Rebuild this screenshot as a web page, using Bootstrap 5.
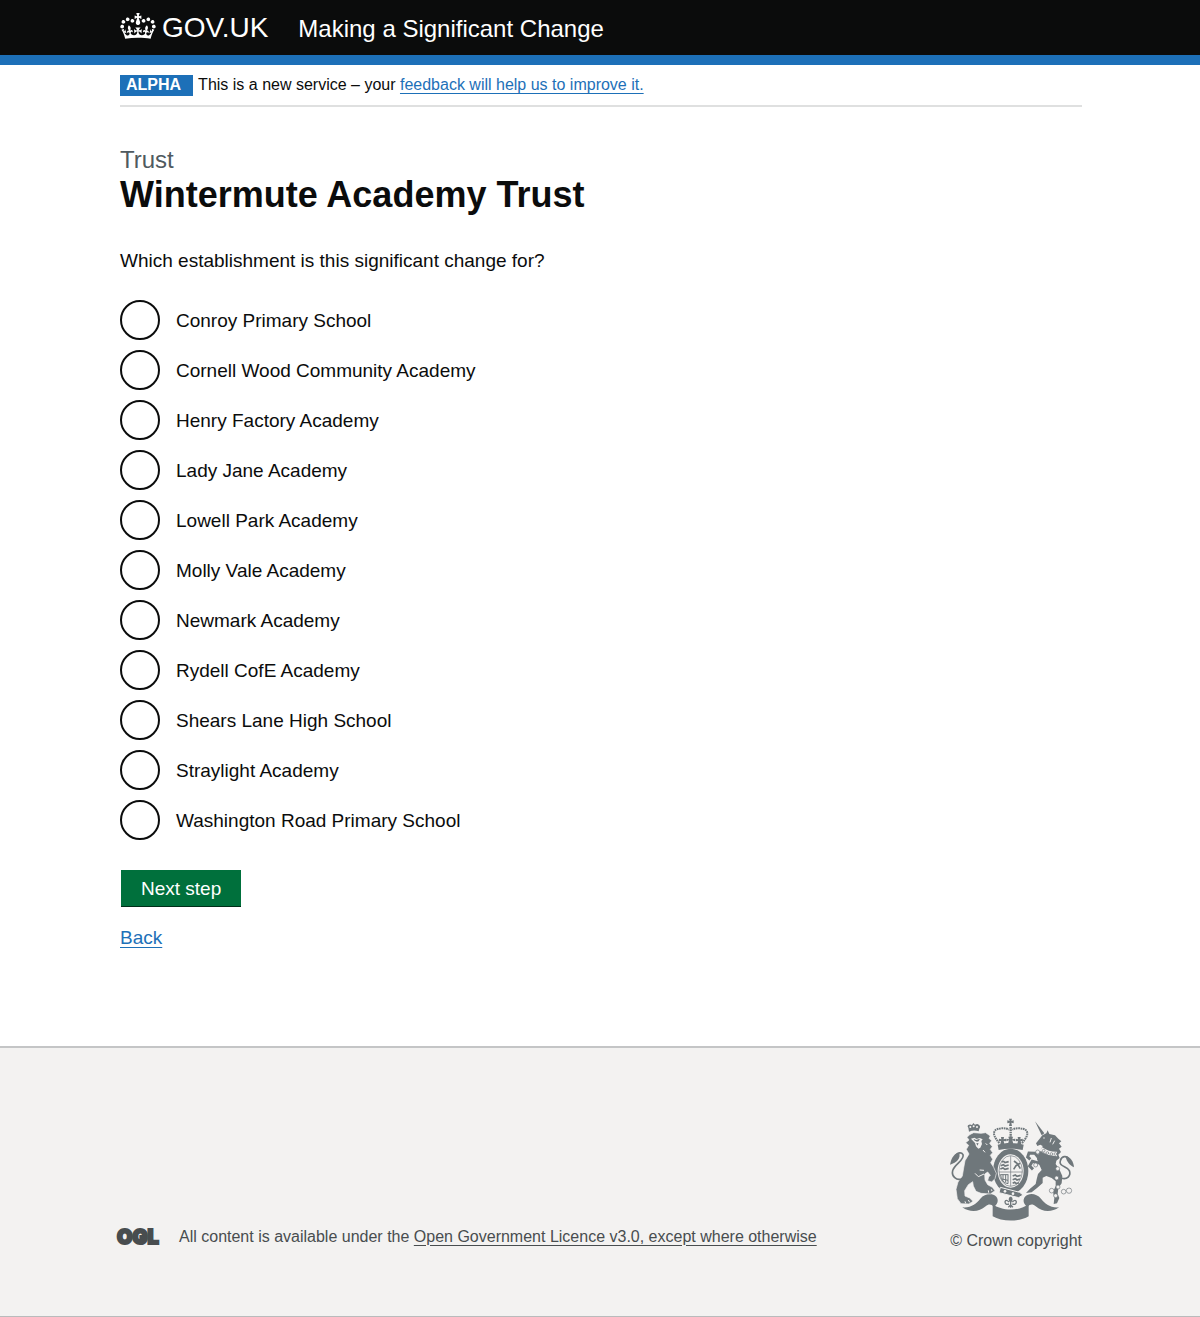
<!DOCTYPE html>
<html lang="en">
<head>
<meta charset="utf-8">
<meta name="viewport" content="width=device-width, initial-scale=1">
<title>Making a Significant Change</title>
<link href="https://cdn.jsdelivr.net/npm/bootstrap@5.3.0/dist/css/bootstrap.min.css" rel="stylesheet">
<style>
  body { font-family: "Liberation Sans", Arial, sans-serif; font-size: 19px; line-height: 25px; color: #0b0c0c; }
  .page-width { max-width: 964px; padding: 0 0 0 2px; margin: 0 auto; }
  .site-header { background: #0b0c0c; border-bottom: 10px solid #1d70b8; }
  .site-header a { color: #fff; text-decoration: none; }
  .header-row { padding-top: 13px; padding-bottom: 10px; column-gap: 30px; }
  .brand-link { font-size: 28px; line-height: 30px; gap: 6px; }
  .service-link { font-size: 24px; line-height: 32px; }
  .phase-row { padding: 10px 0 9px; border-bottom: 2px solid #dfe0e0; font-size: 16px; line-height: 21px; column-gap: 5px; }
  .phase-row > * { line-height: 20px; }
  .phase-tag { background: #1d70b8; color: #fff; font-weight: 700; padding: 0 12px 1px 6px; }
  .text-link { color: #1d70b8; text-decoration: underline; text-decoration-thickness: 1px; text-underline-offset: 3px; }
  .main-area { padding: 38px 0 96px; }
  .caption-text { font-size: 24px; line-height: 30px; color: #505a5f; }
  .page-title { font-size: 36px; line-height: 40px; font-weight: 700; margin-bottom: 33px; }
  .question { font-size: 19px; line-height: 25px; margin-bottom: 27px; }
  .choices { gap: 10px; margin-bottom: 30px; }
  .choice { min-height: 40px; gap: 16px; }
  .choice .form-check-input { width: 40px; height: 40px; margin: 0; border: 2px solid #0b0c0c; flex: none; }
  .choice .form-check-input:checked { background-color: #fff; background-image: radial-gradient(#0b0c0c 0 10px, transparent 11px); }
  .next-button { background: #00703c; color: #fff; border: 0; border-radius: 0; border-bottom: 1px solid #002d18; font-size: 19px; line-height: 25px; padding: 6px 20px 5px; margin: 0 0 18px 1px; }
  .next-button:hover { background: #005a30; color: #fff; }
  .site-footer { background: #f3f2f1; border-top: 2px solid #c4c5c6; border-bottom: 1px solid #b9bbbc; color: #484d4f; font-size: 16px; line-height: 21px; padding: 70px 0 65px; }
  .licence { gap: 19px; padding-bottom: 4px; }
  .ogl-mark { width: 43px; height: 22px; margin-left: -3px; flex: none; }
  .ogl-mark text { font: 900 20px Inter, sans-serif; fill: #484d4f; stroke: #484d4f; stroke-width: 2; }
  .footer-link { color: #484d4f; text-underline-offset: 3px; }
  .crest-link { color: #484d4f; text-decoration: none; gap: 9px; }
</style>
</head>
<body>
<header class="site-header">
  <div class="page-width d-flex flex-wrap align-items-start header-row">
    <a href="#" class="brand-link d-flex align-items-start" aria-label="GOV.UK">
      <svg width="36" height="26" viewBox="0 0 132 97" fill="#fff" aria-hidden="true"><path fill-rule="evenodd" d="M25 30.2c3.5 1.5 7.7-.2 9.1-3.7 1.5-3.6-.2-7.8-3.9-9.2-3.6-1.4-7.6.3-9.1 3.9-1.4 3.5.3 7.5 3.9 9zM9 39.5c3.6 1.5 7.8-.2 9.2-3.7 1.5-3.6-.2-7.8-3.9-9.1-3.6-1.5-7.6.2-9.1 3.8-1.4 3.5.3 7.5 3.8 9zM4.4 57.2c3.5 1.5 7.7-.2 9.1-3.8 1.5-3.6-.2-7.7-3.9-9.1-3.5-1.5-7.6.3-9.1 3.8-1.4 3.5.3 7.6 3.9 9.1zm38.3-21.4c3.5 1.5 7.7-.2 9.1-3.8 1.5-3.6-.2-7.7-3.9-9.1-3.6-1.5-7.6.3-9.1 3.8-1.3 3.6.4 7.7 3.9 9.1zm64.4-5.6c-3.6 1.5-7.8-.2-9.1-3.7-1.5-3.6.2-7.8 3.8-9.2 3.6-1.4 7.7.3 9.2 3.9 1.3 3.5-.4 7.5-3.9 9zm15.9 9.3c-3.6 1.5-7.7-.2-9.1-3.7-1.5-3.6.2-7.8 3.7-9.1 3.6-1.5 7.7.2 9.2 3.8 1.5 3.5-.3 7.5-3.8 9zm4.7 17.7c-3.6 1.5-7.8-.2-9.2-3.8-1.5-3.6.2-7.7 3.9-9.1 3.6-1.5 7.7.3 9.2 3.8 1.3 3.5-.4 7.6-3.9 9.1zM89.3 35.8c-3.6 1.5-7.8-.2-9.2-3.8-1.4-3.6.2-7.7 3.9-9.1 3.6-1.5 7.7.3 9.2 3.8 1.4 3.6-.3 7.7-3.9 9.1zM69.7 17.7l8.9 4.7V9.3l-8.9 2.8c-.2-.3-.5-.6-.9-.9L72.4 0H59.6l3.5 11.2c-.3.3-.6.5-.9.9l-8.8-2.8v13.1l8.8-4.7c.3.3.6.7.9.9l-5 15.4v.1c-.2.8-.4 1.6-.4 2.4 0 4.1 3.1 7.5 7 8.1h.2c.3 0 .7.1 1 .1.4 0 .7 0 1-.1h.2c4-.6 7.1-4.1 7.1-8.1 0-.8-.1-1.7-.4-2.4V34l-5.1-15.4c.4-.2.7-.6 1-.9zM66 92.8c16.9 0 32.8 1.1 47.1 3.2 4-16.9 8.9-26.7 14-33.5l-9.6-3.4c1 4.9 1.1 7.2 0 10.2-1.5-1.4-3-4.3-4.2-8.7L108.6 76c2.8-2 5-3.2 7.5-3.3-4.4 9.4-10 11.9-13.6 11.2-4.3-.8-6.3-4.6-5.6-7.9 1-4.7 5.7-5.9 8-.5 4.3-8.7-3-11.4-7.6-8.8 7.1-7.2 7.9-13.5 2.1-21.1-8 6.1-8.1 12.3-4.5 20.8-4.7-5.4-12.1-2.5-9.5 6.2 3.4-5.2 7.9-2 7.2 3.1-.6 4.3-6.4 7.8-13.5 7.2-10.3-.9-10.9-8-11.2-13.8 2.5-.5 7.1 1.8 11 7.3L80.2 60c-4.1 4.4-8 5.3-12.3 5.4 1.4-4.4 8-11.6 8-11.6H55.5s6.4 7.2 7.9 11.6c-4.2-.1-8-1-12.3-5.4l1.4 16.4c3.9-5.5 8.5-7.7 10.9-7.3-.3 5.8-.9 12.8-11.1 13.8-7.2.6-12.9-2.9-13.5-7.2-.7-5 3.8-8.3 7.1-3.1 2.7-8.7-4.6-11.6-9.4-6.2 3.7-8.5 3.6-14.7-4.6-20.8-5.8 7.6-5 13.9 2.2 21.1-4.7-2.6-11.9.1-7.7 8.8 2.3-5.5 7.1-4.2 8.1.5.7 3.3-1.3 7.1-5.7 7.9-3.5.7-9-1.8-13.5-11.2 2.5.1 4.7 1.3 7.5 3.3l-4.7-15.4c-1.2 4.4-2.7 7.2-4.3 8.7-1.1-3-.9-5.3 0-10.2l-9.5 3.4c5 6.9 9.9 16.7 14 33.5 14.8-2.1 30.8-3.2 47.7-3.2z"/></svg>
      <span>GOV.UK</span>
    </a>
    <a href="#" class="service-link">Making a Significant Change</a>
  </div>
</header>

<div class="page-width">
  <div class="phase-row d-flex flex-wrap">
    <strong class="phase-tag">ALPHA</strong>
    <span>This is a new service – your <a href="#" class="text-link">feedback will help us to improve it.</a></span>
  </div>

  <main class="main-area">
    <div class="caption-text">Trust</div>
    <h1 class="page-title">Wintermute Academy Trust</h1>
    <form>
      <fieldset>
        <legend class="question">Which establishment is this significant change for?</legend>
        <div class="choices d-flex flex-column">
          <div class="choice d-flex align-items-center"><input class="form-check-input" type="radio" name="school" id="s1"><label for="s1">Conroy Primary School</label></div>
          <div class="choice d-flex align-items-center"><input class="form-check-input" type="radio" name="school" id="s2"><label for="s2">Cornell Wood Community Academy</label></div>
          <div class="choice d-flex align-items-center"><input class="form-check-input" type="radio" name="school" id="s3"><label for="s3">Henry Factory Academy</label></div>
          <div class="choice d-flex align-items-center"><input class="form-check-input" type="radio" name="school" id="s4"><label for="s4">Lady Jane Academy</label></div>
          <div class="choice d-flex align-items-center"><input class="form-check-input" type="radio" name="school" id="s5"><label for="s5">Lowell Park Academy</label></div>
          <div class="choice d-flex align-items-center"><input class="form-check-input" type="radio" name="school" id="s6"><label for="s6">Molly Vale Academy</label></div>
          <div class="choice d-flex align-items-center"><input class="form-check-input" type="radio" name="school" id="s7"><label for="s7">Newmark Academy</label></div>
          <div class="choice d-flex align-items-center"><input class="form-check-input" type="radio" name="school" id="s8"><label for="s8">Rydell CofE Academy</label></div>
          <div class="choice d-flex align-items-center"><input class="form-check-input" type="radio" name="school" id="s9"><label for="s9">Shears Lane High School</label></div>
          <div class="choice d-flex align-items-center"><input class="form-check-input" type="radio" name="school" id="s10"><label for="s10">Straylight Academy</label></div>
          <div class="choice d-flex align-items-center"><input class="form-check-input" type="radio" name="school" id="s11"><label for="s11">Washington Road Primary School</label></div>
        </div>
      </fieldset>
      <button type="submit" class="btn next-button d-block">Next step</button>
      <a href="#" class="text-link">Back</a>
    </form>
  </main>
</div>

<footer class="site-footer">
  <div class="page-width d-flex flex-wrap justify-content-between align-items-end">
    <div class="licence d-flex align-items-center">
      <svg class="ogl-mark" viewBox="0 0 43 22" overflow="visible" role="img" aria-label="Open Government Licence"><text x="0" y="19">OGL</text></svg>
      <span>All content is available under the <a href="#" class="footer-link">Open Government Licence v3.0, except where otherwise</a></span>
    </div>
    <a href="#" class="crest-link d-flex flex-column">
      <svg width="125" height="103" viewBox="29 22 375 309" aria-hidden="true" fill="#6f777b">
        <!-- central crown -->
        <path d="M206 24h9l-2 7 7-2v9l-7-2 2 10h-9l2-10-7 2v-9l7 2z"/>
        <g fill="none" stroke="#6f777b" stroke-width="6" stroke-dasharray="5 2">
          <path d="M177 97c-14-16-20-28-13-37 8-9 34-9 42-3M245 97c14-16 20-28 13-37-8-9-34-9-42-3"/>
          <path d="M211 49v30" stroke-width="7"/>
        </g>
        <path d="M172 102c24-7 54-7 78 0l-3 16c-23-5-49-5-72 0zM203 99l3-10-8 3v-8l8 2-2-8h14l-2 8 8-2v8l-8-3 3 10zM180 100l2-9-7 1 1-8 7 2-1-7h9l-1 7 7-2v8l-7-1 2 9zM231 100l2-9-7 1v-8l7 2-1-7h9l-1 7 7-2 1 8-7-1 2 9z"/>
        <!-- scroll -->
        <path d="M157 280C182 302 240 302 265 280L265 317C238 334 184 334 157 317z"/>
        <path id="ribbon" d="M66 290C94 292 108 278 120 264C134 248 156 246 168 258C176 268 172 282 160 288C152 279 144 280 136 287C116 305 88 306 66 290z"/>
        <use href="#ribbon" transform="matrix(-1 0 0 1 422 0)"/>
        <g fill="none" stroke="#6f777b" stroke-width="4"><path d="M211 259v32M211 259q-8 6 0 15q8-9 0-15M206 274q-10-10-12 0 1 10 12 6M216 274q10-10 12 0-1 10-12 6M204 290l7-7 7 7"/></g>
        <!-- garter and shield -->
        <ellipse cx="211" cy="181" rx="53" ry="67"/>
        <ellipse cx="211" cy="181" rx="39" ry="50" fill="#f3f2f1"/>
        <g fill="none" stroke="#6f777b"><ellipse cx="211" cy="181" rx="35" ry="46" stroke-width="2"/>
        <path d="M211 136v90M176 184h70" stroke-width="2"/>
        <path d="M184 154l6-2 4 4 11-3M181 165l8-3 5 4 11-3M180 175l8-3 6 4 11-3M217 196l8-3 5 4 11-3M217 207l8-3 5 4 9-3M217 218l6-3 5 4 8-3" stroke-width="5"/><path d="M221 151l10 8 9 15M239 158l-12 7-7 11" stroke-width="5"/><path d="M180 192h24M181 192q1 24 22 27M188 192v18M196 192v22M203 192v27M185 205l18 4" stroke-width="3"/></g>
        <path d="M180 230l58 15 10 8-13 8-59-15z" stroke="#f3f2f1" stroke-width="3"/>
        <circle cx="194" cy="242" r="4" fill="#f3f2f1"/><circle cx="218" cy="249" r="4" fill="#f3f2f1"/>
        <!-- lion -->
        <path d="M84 51q-5-6 2-9 4-2 9 1l4-6 5 5q8-4 12 1 6 5 1 11l-2 8q-15-5-29 1z"/>
        <g fill="#f3f2f1"><circle cx="90" cy="49" r="3"/><circle cx="100" cy="47" r="3"/><circle cx="110" cy="49" r="3"/></g>
        <path stroke="#f3f2f1" stroke-width="2" d="M88 72L100 66 122 68 136 66 150 76 146 83 154 90 148 98 156 108 150 116 157 126 150 134 157 146 151 156 160 170 168 188 164 204 154 214 142 210 145 199 150 194 142 184 133 190 134 208 142 222 156 230 164 240 150 250 122 248 107 242 99 226 97 213 84 222 73 240 74 256 88 262 98 272 86 280 62 279 51 264 47 236 53 214 66 196 70 172 74 150 86 130 78 116 85 104 76 96 86 88 80 80z"/>
        <path d="M66 204C48 212 33 196 37 180C42 160 74 148 68 132C63 123 53 126 46 134" fill="none" stroke="#6f777b" stroke-width="5"/>
        <path d="M29 162C33 140 43 127 56 126C63 141 49 156 29 162z"/>
        <path d="M92 84l10-3 7 4 9-3 9 4-4 5 2 9-5 11-6 3-7-7-3-10z" fill="#f3f2f1"/>
        <path d="M99 84l8 4 12-4-4 8-5 1-7-3zM108 97l7 1-4 7z"/>
        <path d="M128 118l6 7M136 98l5 5M104 188l10 10 17-8M118 178l13 1M88 275l-4-7M76 278l-2-6M145 246l-1-7M155 241l-2-5" fill="none" stroke="#f3f2f1" stroke-width="3"/>
        <!-- unicorn -->
        <path d="M284 32l28 36-8 6z"/>
        <path d="M306 74L318 68 322 59 327 70 344 74 354 84 363 92 356 98 364 108 356 114 362 124 354 132 358 142 348 150 346 160 357 176 366 196 364 218 354 232 352 250 357 262 350 278 340 280 342 262 338 244 346 226 346 212 334 202 318 196 307 201 307 217 291 231 274 245 257 247 269 234 286 220 289 206 293 190 304 178 297 162 290 146 291 136 300 120 307 106 300 102 291 106 287 98 298 84z"/>
        <path d="M300 158L276 152 268 166 278 176M298 145L284 128 266 127 262 139 270 146" fill="none" stroke="#6f777b" stroke-width="9"/>
        <path d="M362 202C380 209 393 195 387 180C381 166 354 168 360 150C364 136 378 134 386 144" fill="none" stroke="#6f777b" stroke-width="5"/>
        <path d="M375 137C391 139 400 154 401 170C388 165 380 154 375 137z"/>
        <path d="M302 115Q324 131 350 130" fill="none" stroke="#f3f2f1" stroke-width="13"/>
        <path d="M302 122Q324 139 348 138" fill="none" stroke="#6f777b" stroke-width="2"/>
        <path d="M333 82l-4 13M343 90l-6 11" fill="none" stroke="#f3f2f1" stroke-width="3"/><circle cx="311" cy="82" r="2" fill="#f3f2f1"/>
        <g fill="#f3f2f1" stroke="#6f777b" stroke-width="2"><circle cx="292" cy="124" r="6"/><circle cx="286" cy="163" r="6"/><circle cx="310" cy="120" r="4"/><circle cx="321" cy="127" r="4"/><circle cx="333" cy="130" r="4"/><circle cx="345" cy="130" r="4"/><circle cx="352" cy="174" r="6"/><circle cx="349" cy="202" r="6"/><circle cx="334" cy="240" r="7"/><circle cx="353" cy="229" r="6"/><circle cx="370" cy="243" r="7"/><circle cx="386" cy="240" r="8"/><circle cx="346" cy="255" r="6"/></g>
      </svg>
      <span>© Crown copyright</span>
    </a>
  </div>
</footer>
<script src="https://cdn.jsdelivr.net/npm/bootstrap@5.3.0/dist/js/bootstrap.bundle.min.js"></script>
</body>
</html>
